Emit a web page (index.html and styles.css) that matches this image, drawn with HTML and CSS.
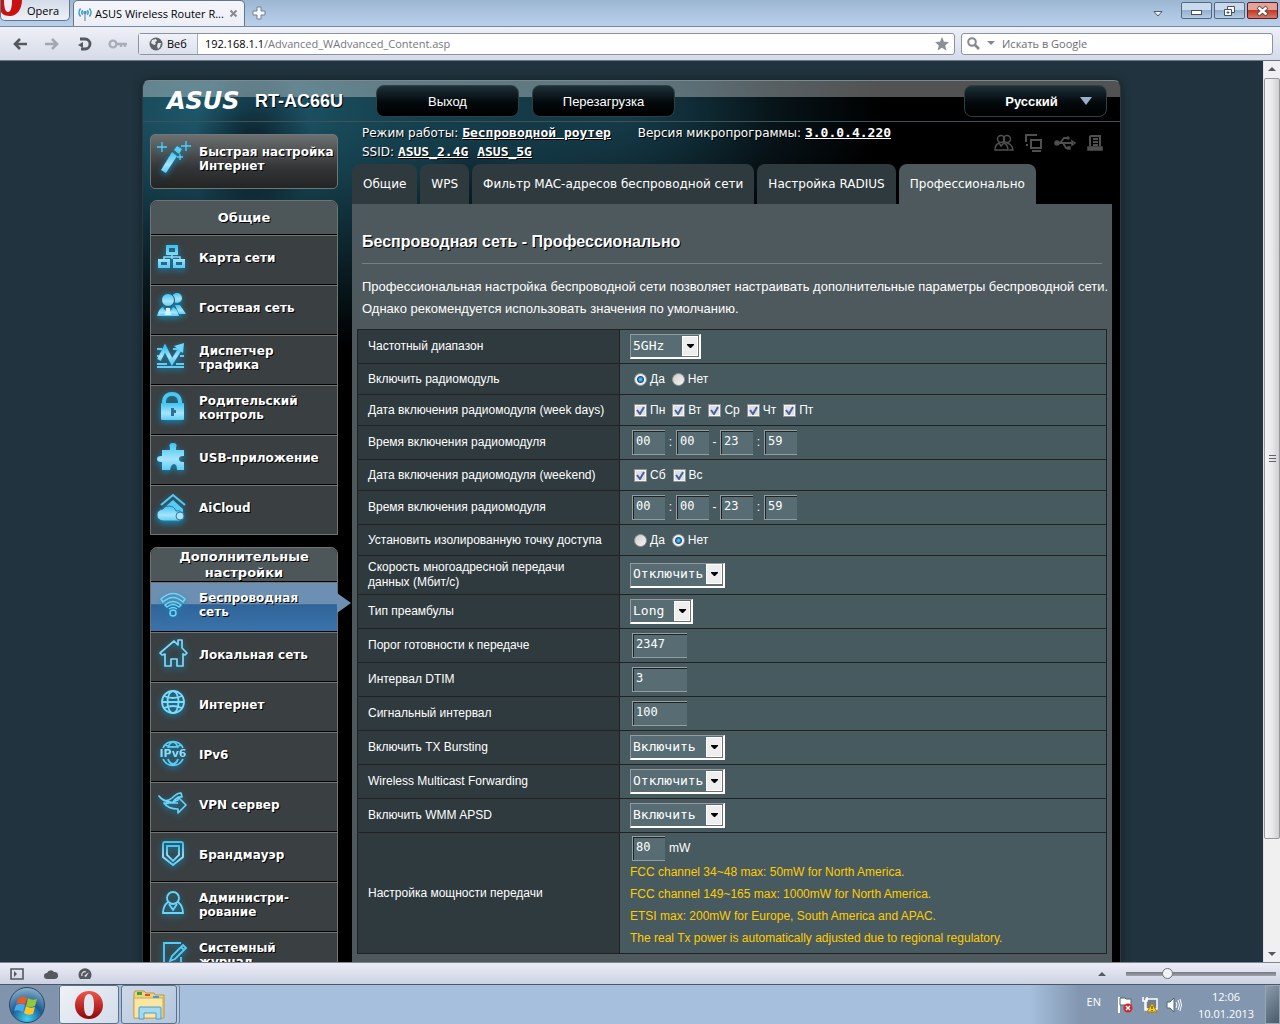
FILE: index.html
```html
<!DOCTYPE html>
<html lang="ru">
<head>
  <meta charset="UTF-8">
  <meta name="viewport" content="width=device-width, initial-scale=1.0">
  <title>ASUS Wireless Router RT-AC66U</title>
  <link rel="stylesheet" href="styles.css">
</head>
<body>

  <svg class="defs" width="0" height="0" aria-hidden="true">
    <defs>
      <linearGradient id="ice" x1="0" y1="0" x2="0" y2="1">
        <stop offset="0" stop-color="#3fc4f2"/>
        <stop offset="0.6" stop-color="#a5e4fb"/>
        <stop offset="1" stop-color="#5fcdf4"/>
      </linearGradient>
      <linearGradient id="operaRed" x1="0" y1="0" x2="0" y2="1">
        <stop offset="0" stop-color="#f0564a"/>
        <stop offset="1" stop-color="#8f0508"/>
      </linearGradient>
    </defs>
  </svg>

  <!-- Вкладки браузера -->
  <div class="tab-bar">
    <button type="button" class="opera-button">
      <svg width="22" height="20" viewBox="0 0 22 20"><path fill="#c9110f" d="M0 0h21c0 9-5 16-12 16-4 0-7-1-9-4z"/><path fill="#eceef5" d="M3 0h8c0 7-1 12-4 12S3 7 3 0z"/></svg>
      <span>Opera</span>
    </button>
    <div class="browser-tab">
      <svg width="16" height="16" viewBox="0 0 16 16" fill="none" stroke="#3f9ccb" stroke-width="1.6"><path d="M3.600 2.500a6 6 0 0 0 0 8M12.400 2.500a6 6 0 0 1 0 8M5.800 4.300a3 3 0 0 0 0 4.400M10.200 4.300a3 3 0 0 1 0 4.400"/><path stroke="#9aa5ae" d="M8 6v9"/><circle cx="8" cy="6.500" r="1" fill="#3f9ccb"/></svg>
      <span class="tab-title">ASUS Wireless Router R...</span>
      <button type="button" class="tab-close" aria-label="Закрыть вкладку"><svg width="9" height="9" viewBox="0 0 9 9"><path d="M1.500 1.500l6 6M7.500 1.500l-6 6" stroke="#878b92" stroke-width="2"/></svg></button>
    </div>
    <button type="button" class="tab-add" aria-label="Новая вкладка"><svg width="14" height="14" viewBox="0 0 14 14"><path d="M5 1h4v4h4v4H9v4H5V9H1V5h4z" fill="#f5f7fa" stroke="#75818f"/></svg></button>
    <div class="window-buttons">
      <button type="button" class="tab-list" aria-label="Список вкладок"><svg width="10" height="8" viewBox="0 0 10 8"><path d="M1 1.500h8L5 6z" fill="#f2f5f9" stroke="#505c6a"/></svg></button>
      <button type="button" class="win-button" aria-label="Свернуть"><svg width="13" height="12" viewBox="0 0 13 12"><rect x="1.500" y="5.500" width="10" height="4" fill="#fff" stroke="#46515e"/></svg></button>
      <button type="button" class="win-button" aria-label="Развернуть"><svg width="13" height="12" viewBox="0 0 13 12" fill="#fff" stroke="#46515e"><path d="M4.500 1.500h7v6h-7z"/><path d="M1.500 4.500h7v6h-7z"/><path d="M4 7h2v1H4z"/></svg></button>
      <button type="button" class="win-button win-close" aria-label="Закрыть"><svg width="13" height="12" viewBox="0 0 13 12"><path d="M2 2l9 8M11 2l-9 8" stroke="#4a3a40" stroke-width="4"/><path d="M2.500 2.500l8 7M10.500 2.500l-8 7" stroke="#fff" stroke-width="2.400"/></svg></button>
    </div>
  </div>

  <!-- Адресная строка -->
  <div class="address-bar">
    <div class="nav-buttons">
      <button type="button" aria-label="Назад"><svg width="16" height="14" viewBox="0 0 16 14"><path d="M15 7H3M8 2L3 7l5 5" fill="none" stroke="#55585e" stroke-width="2.600"/></svg></button>
      <button type="button" aria-label="Вперёд"><svg width="16" height="14" viewBox="0 0 16 14"><path d="M1 7h12M8 2l5 5-5 5" fill="none" stroke="#a3a7b0" stroke-width="2.600"/></svg></button>
      <button type="button" aria-label="Обновить"><svg width="16" height="14" viewBox="0 0 16 14"><path d="M4 2h5a4.800 4.800 0 0 1 0 10H5" fill="none" stroke="#55585e" stroke-width="2.800"/><path d="M2 8l5-3v6z" fill="#55585e"/></svg></button>
      <button type="button" aria-label="Пароль"><svg width="20" height="10" viewBox="0 0 20 10" fill="none" stroke="#a9adb6" stroke-width="2.400"><circle cx="5" cy="5" r="3.400"/><path d="M8 5h11M13 5v3M17 5v3"/></svg></button>
    </div>
    <div class="url-box">
      <button type="button" class="web-button">
        <svg width="14" height="14" viewBox="0 0 14 14"><circle cx="7" cy="7" r="6.500" fill="#5f636a"/><path d="M3 3l4-1 1 2-2 1 1 2-2 1-3-2zM9 6l3 0-1 4-2 2-1-3z" fill="#e8eaf0"/></svg>
        <span>Веб</span>
      </button>
      <a class="url" href="#"><b>192.168.1.1</b>/Advanced_WAdvanced_Content.asp</a>
      <svg width="14" height="14" viewBox="0 0 14 14"><path d="M7 0l2 4.700 5 .4-3.800 3.300 1.200 5L7 10.800l-4.400 2.600 1.200-5L0 5.100l5-.4z" fill="#8b8f96"/></svg>
    </div>
    <div class="search-box">
      <svg width="13" height="13" viewBox="0 0 13 13" fill="none" stroke="#85898f" stroke-width="2"><circle cx="5" cy="5" r="3.800"/><path d="M8 8l4 4" stroke-width="2.600"/></svg>
      <svg width="8" height="5" viewBox="0 0 8 5"><path d="M0 0h8L4 4z" fill="#85898f"/></svg>
      <input type="text" aria-label="Поиск" placeholder="Искать в Google">
    </div>
  </div>

  <!-- Страница роутера -->
  <div class="viewport">
    <div class="page">
      <div class="router">
        <header class="top">
          <span class="logo">ASUS</span>
          <span class="model">RT-AC66U</span>
          <button type="button" class="top-button">Выход</button>
          <button type="button" class="top-button">Перезагрузка</button>
          <select class="top-button language" aria-label="Язык">
            <option>Русский</option>
          </select>
        </header>

        <div class="columns">
          <nav class="sidebar">
            <a class="quick-setup" href="#">
              <svg class="icon" viewBox="0 0 32 32"><path d="M4 27L15 9l5 4L9 30z" fill="url(#ice)"/><path d="M17 7l3-4 5 3-3 5z" fill="#56cdf7"/><path d="M5-1v10M0 4h10M29-2v10M24 3h10M23 11v6M20 14h6" stroke="#56cdf7" stroke-width="1.300"/></svg>
              <span>Быстрая настройка Интернет</span>
            </a>

            <section class="menu">
              <h2>Общие</h2>
              <ul>
                <li><a href="#">
                  <svg class="icon" viewBox="0 0 32 32" fill="none" stroke="url(#ice)" stroke-width="3"><path d="M11.500 4.500h9v7h-9zM3.500 18.500h9v6h-9zM18.500 18.500h9v6h-9z"/><path d="M16 13v4M8 17v-2h16v2" stroke="#8adcf9" stroke-width="1.500"/></svg>
                  <span>Карта сети</span></a></li>
                <li><a href="#">
                  <svg class="icon" viewBox="0 0 32 32" fill="url(#ice)"><circle cx="21" cy="6" r="5"/><path d="M19 13h5l6 9h-7z"/><circle cx="12" cy="8" r="6.500" stroke="#30505e"/><path d="M1 24q2-8 6-9l5 8 5-8q4 1 6 9z"/><path d="M10 16h4l1 7h-6z" fill="#d4f3ff"/></svg>
                  <span>Гостевая сеть</span></a></li>
                <li><a href="#">
                  <svg class="icon" viewBox="0 0 32 32" fill="none" stroke="#62cdf4" stroke-width="2"><path d="M1 7h5M17 7h5M1 14h4M24 14h4M1 22h10M20 22h8M1 25h27"/><path d="M3 18l6-12 7 14 8-13" stroke="url(#ice)" stroke-width="4"/><path d="M18 4l10-3-1 10z" fill="#72d5f8" stroke="none"/></svg>
                  <span>Диспетчер<br>трафика</span></a></li>
                <li><a href="#">
                  <svg class="icon" viewBox="0 0 32 32"><path d="M8 13V9q1-7 8-7t8 7v4" fill="none" stroke="#4ac7f3" stroke-width="4"/><rect x="5" y="11" width="23" height="17" rx="1" fill="url(#ice)"/><path d="M15 16h3v2h2v3h-2v3h-3z" fill="#2c7193"/></svg>
                  <span>Родительский<br>контроль</span></a></li>
                <li><a href="#">
                  <svg class="icon" viewBox="0 0 32 32"><path d="M6 8h8V6q-2-5 3-5t3 5v2h8v6h-1q-4 0-4 3t4 3h1v8h-7q0-6-3-6t-4 6H6v-8H5q-4 0-4-3t4-3h1z" fill="url(#ice)"/></svg>
                  <span>USB-приложение</span></a></li>
                <li><a href="#">
                  <svg class="icon" viewBox="0 0 32 32"><path d="M5 13L17 3l12 10" fill="none" stroke="#55ccf5" stroke-width="2"/><path d="M8 16l9-8 10 9v9H15z" fill="#55ccf5"/><path d="M7 29q-6-1-6-6t6-6q1-3 6-3t7 5q6-1 7 4t-4 6z" fill="url(#ice)" stroke="#2e7895"/><circle cx="24" cy="24" r="4" fill="#a5e4fb" stroke="#2e7895"/></svg>
                  <span>AiCloud</span></a></li>
              </ul>
            </section>

            <section class="menu">
              <h2>Дополнительные<br>настройки</h2>
              <ul>
                <li class="active"><a href="#">
                  <svg class="icon" viewBox="0 0 32 32" fill="none" stroke="#6fd5f8" stroke-width="1.500"><path d="M5 10q12-11 24 0l-2 3q-10-9-20 0zM9 16q8-7 16 0l-2 2q-6-5-12 0zM13 20q4-3 8 0"/><circle cx="17" cy="24" r="3"/></svg>
                  <span>Беспроводная<br>сеть</span></a></li>
                <li><a href="#">
                  <svg class="icon" viewBox="0 0 32 32" fill="none" stroke="#7fdaf9" stroke-width="1.700" stroke-linejoin="round"><path d="M4 14L18 2l4 4V1h4v8l5 5-2 2-2-1v12h-6v-7h-6v7H9V15l-3 1z"/></svg>
                  <span>Локальная сеть</span></a></li>
                <li><a href="#">
                  <svg class="icon" viewBox="0 0 32 32" fill="none" stroke="#7fdaf9" stroke-width="1.800"><circle cx="17" cy="13" r="11"/><ellipse cx="17" cy="13" rx="5.500" ry="11"/><path d="M8 7q9 4 18 0M6 13h22M8 19q9-4 18 0"/></svg>
                  <span>Интернет</span></a></li>
                <li><a href="#">
                  <svg class="icon" viewBox="0 0 32 32" fill="none" stroke="#5acdf4" stroke-width="1.800"><path d="M7 9a11 11 0 0 1 20 0M7 20a11 11 0 0 0 20 0M12 9q1-5 5-6 4 1 5 6M12 20q1 4 5 5 4-1 5-5M9 6q8 4 16 0"/><text x="17" y="18" text-anchor="middle" class="icon-text">IPv6</text></svg>
                  <span>IPv6</span></a></li>
                <li><a href="#">
                  <svg class="icon" viewBox="0 0 32 32" fill="none" stroke="#6fd5f8" stroke-width="1.600" stroke-linejoin="round"><path d="M3 7q6 8 13 2 5-5 9-5l1 4q-5-1-9 5l5-2v-3l8 8-8 8v-4q-10 0-14-6 4 1 7-1Q7 13 3 7zM10 14h12"/></svg>
                  <span>VPN сервер</span></a></li>
                <li><a href="#">
                  <svg class="icon" viewBox="0 0 32 32" fill="none" stroke="url(#ice)" stroke-width="1.800"><path d="M9 3h16q2 0 2 2v13l-10 8-10-8V5q0-2 2-2z"/><path d="M11 7h12v9l-6 6-6-6z"/></svg>
                  <span>Брандмауэр</span></a></li>
                <li><a href="#">
                  <svg class="icon" viewBox="0 0 32 32" fill="none" stroke="#6fd5f8" stroke-width="1.800"><circle cx="17" cy="9" r="6"/><path d="M12 13q-5 4-5 11h20q0-7-5-11M13 15l4 6 4-6"/></svg>
                  <span>Администри-<br>рование</span></a></li>
                <li><a href="#">
                  <svg class="icon" viewBox="0 0 32 32" fill="none" stroke="#56cdf7" stroke-width="1.800"><path d="M25 4H8v23h17V18"/><path d="M14 22l2-5L27 6l3 3-11 11zM25 8l3 3"/></svg>
                  <span>Системный<br>журнал</span></a></li>
              </ul>
            </section>
          </nav>

          <main class="content">
            <div class="info">
              <div class="info-text">
                <p>Режим работы: <a href="#">Беспроводной роутер</a> <span class="firmware">Версия микропрограммы: <a href="#">3.0.0.4.220</a></span></p>
                <p>SSID: <a href="#">ASUS_2.4G</a> <a href="#" class="second-ssid">ASUS_5G</a></p>
              </div>
              <div class="status-icons">
                <svg width="20" height="18" viewBox="0 0 20 18"><circle cx="13" cy="5" r="3.500"/><path d="M13 9q5 1 6 7h-4"/><circle cx="7" cy="5" r="3.500"/><path d="M5 9q-4 2-4 7h13q0-5-4-7l-3 3z"/></svg>
                <svg width="20" height="18" viewBox="0 0 20 18"><path d="M13 1H2v7M2 11h2M7 6h10v8H7zM8 17h9" stroke-width="2"/></svg>
                <svg width="22" height="18" viewBox="0 0 22 18"><path d="M2 9h17M6 9l4-5h3M9 9l3 5h3" stroke-width="1.800"/><circle cx="3" cy="9" r="2" fill="#4f4f4f"/><circle cx="14" cy="4" r="1"/><path d="M18 7l3 2-3 2zM14 13h2v2h-2z"/></svg>
                <svg width="18" height="18" viewBox="0 0 18 18"><path d="M4 12V3q0-1 1-1h9v10M7 5h5M7 8h5M7 11h5" stroke-width="2"/><path d="M2 13h14v3H2z" fill="#4f4f4f"/></svg>
              </div>
            </div>

            <div class="tabs">
              <a href="#">Общие</a>
              <a href="#">WPS</a>
              <a href="#">Фильтр MAC-адресов беспроводной сети</a>
              <a href="#">Настройка RADIUS</a>
              <a href="#" class="current">Профессионально</a>
            </div>

            <form class="panel">
              <h1>Беспроводная сеть - Профессионально</h1>
              <p class="description">Профессиональная настройка беспроводной сети позволяет настраивать дополнительные параметры беспроводной сети.<br>Однако рекомендуется использовать значения по умолчанию.</p>

              <table class="settings">
                <tr>
                  <th><label for="band">Частотный диапазон</label></th>
                  <td><select id="band" class="select-medium"><option>5GHz</option><option>2.4GHz</option></select></td>
                </tr>
                <tr class="low">
                  <th>Включить радиомодуль</th>
                  <td><div class="choices">
                    <label><input type="radio" name="radio" checked>Да</label>
                    <label><input type="radio" name="radio">Нет</label>
                  </div></td>
                </tr>
                <tr class="low">
                  <th>Дата включения радиомодуля (week days)</th>
                  <td><div class="choices">
                    <label><input type="checkbox" checked>Пн</label>
                    <label><input type="checkbox" checked>Вт</label>
                    <label><input type="checkbox" checked>Ср</label>
                    <label><input type="checkbox" checked>Чт</label>
                    <label><input type="checkbox" checked>Пт</label>
                  </div></td>
                </tr>
                <tr>
                  <th>Время включения радиомодуля</th>
                  <td><div class="time">
                    <input type="text" value="00" aria-label="Часы начала"><span>:</span>
                    <input type="text" value="00" aria-label="Минуты начала"><span>-</span>
                    <input type="text" value="23" aria-label="Часы окончания"><span>:</span>
                    <input type="text" value="59" aria-label="Минуты окончания">
                  </div></td>
                </tr>
                <tr class="low">
                  <th>Дата включения радиомодуля (weekend)</th>
                  <td><div class="choices">
                    <label><input type="checkbox" checked>Сб</label>
                    <label><input type="checkbox" checked>Вс</label>
                  </div></td>
                </tr>
                <tr>
                  <th>Время включения радиомодуля</th>
                  <td><div class="time">
                    <input type="text" value="00" aria-label="Часы начала, выходные"><span>:</span>
                    <input type="text" value="00" aria-label="Минуты начала, выходные"><span>-</span>
                    <input type="text" value="23" aria-label="Часы окончания, выходные"><span>:</span>
                    <input type="text" value="59" aria-label="Минуты окончания, выходные">
                  </div></td>
                </tr>
                <tr class="low">
                  <th>Установить изолированную точку доступа</th>
                  <td><div class="choices">
                    <label><input type="radio" name="isolated">Да</label>
                    <label><input type="radio" name="isolated" checked>Нет</label>
                  </div></td>
                </tr>
                <tr class="high">
                  <th><label for="mrate">Скорость многоадресной передачи<br>данных (Мбит/с)</label></th>
                  <td><select id="mrate"><option>Отключить</option></select></td>
                </tr>
                <tr>
                  <th><label for="preamble">Тип преамбулы</label></th>
                  <td><select id="preamble" class="select-small"><option>Long</option><option>Short</option></select></td>
                </tr>
                <tr>
                  <th><label for="rts">Порог готовности к передаче</label></th>
                  <td><input type="text" id="rts" value="2347"></td>
                </tr>
                <tr>
                  <th><label for="dtim">Интервал DTIM</label></th>
                  <td><input type="text" id="dtim" value="3"></td>
                </tr>
                <tr>
                  <th><label for="beacon">Сигнальный интервал</label></th>
                  <td><input type="text" id="beacon" value="100"></td>
                </tr>
                <tr>
                  <th><label for="bursting">Включить TX Bursting</label></th>
                  <td><select id="bursting"><option>Включить</option><option>Отключить</option></select></td>
                </tr>
                <tr>
                  <th><label for="multicast">Wireless Multicast Forwarding</label></th>
                  <td><select id="multicast"><option>Отключить</option><option>Включить</option></select></td>
                </tr>
                <tr>
                  <th><label for="apsd">Включить WMM APSD</label></th>
                  <td><select id="apsd"><option>Включить</option><option>Отключить</option></select></td>
                </tr>
                <tr>
                  <th><label for="power">Настройка мощности передачи</label></th>
                  <td class="power">
                    <div class="time"><input type="text" id="power" value="80"><span class="unit">mW</span></div>
                    <p>FCC channel 34~48 max: 50mW for North America.</p>
                    <p>FCC channel 149~165 max: 1000mW for North America.</p>
                    <p>ETSI max: 200mW for Europe, South America and APAC.</p>
                    <p>The real Tx power is automatically adjusted due to regional regulatory.</p>
                  </td>
                </tr>
              </table>
            </form>
          </main>
        </div>
      </div>
    </div>
    <div class="scrollbar">
      <svg width="16" height="17" viewBox="0 0 16 17"><path d="M4 10l4-4 4 4z" fill="#55585e"/></svg>
      <div class="thumb"></div>
      <svg width="16" height="17" viewBox="0 0 16 17"><path d="M4 7l4 4 4-4z" fill="#55585e"/></svg>
    </div>
  </div>

  <!-- Строка состояния -->
  <div class="status-bar">
    <svg width="14" height="12" viewBox="0 0 14 12"><path d="M1 1h12v10H1z" fill="none" stroke="#55585e" stroke-width="1.600"/><path d="M4 3l3 3-3 3z" fill="#55585e"/></svg>
    <svg width="14" height="12" viewBox="0 0 14 12"><path d="M3 11a3 3 0 0 1 0-6 4 4 0 0 1 7-1 3.500 3.500 0 0 1 1 7z" fill="#55585e"/></svg>
    <svg width="14" height="12" viewBox="0 0 14 12"><path d="M2 11a6.500 6.500 0 1 1 10 0z" fill="#55585e"/><path d="M4 8a3 3 0 0 1 4-4" stroke="#e0e3ef" stroke-width="1.200" fill="none"/><path d="M6 8l5-4-3 5z" fill="#e0e3ef"/></svg>
    <svg class="zoom-toggle" width="8" height="5" viewBox="0 0 8 5"><path d="M0 5l4-4 4 4z" fill="#55585e"/></svg>
    <input type="range" class="zoom" min="0" max="100" value="26" aria-label="Масштаб">
  </div>

  <!-- Панель задач -->
  <div class="taskbar">
    <button type="button" class="start" aria-label="Пуск">
      <svg width="38" height="38" viewBox="0 0 38 38"><defs><radialGradient id="orb" cx="0.500" cy="0.900" r="0.900"><stop offset="0" stop-color="#3fd0f5"/><stop offset="0.500" stop-color="#1d5c93"/><stop offset="1" stop-color="#8fb4cd"/></radialGradient></defs><circle cx="19" cy="19" r="17.500" fill="url(#orb)" stroke="#2b4660"/><path d="M10 13q5-4 9-1l-2 7q-4-3-9-1z" fill="#ea5a24"/><path d="M20 12q4 3 9 1l-2 7q-4 2-9 0z" fill="#93c83d"/><path d="M8 19q5-3 9 0l-2 7q-4-3-9-1z" fill="#4aa9e8"/><path d="M18 20q4 3 9 1l-2 7q-5 2-9-1z" fill="#fbc52c"/></svg>
    </button>
    <button type="button" class="task" aria-label="Opera">
      <svg width="30" height="30" viewBox="0 0 30 30"><path fill="url(#operaRed)" fill-rule="evenodd" d="M15 1c8 0 14 6 14 14s-6 14-14 14S1 23 1 15 7 1 15 1zm0 3c-4 0-5 5-5 11s1 11 5 11 5-5 5-11-1-11-5-11z"/></svg>
    </button>
    <button type="button" class="task explorer" aria-label="Проводник">
      <svg width="34" height="30" viewBox="0 0 34 30"><path d="M2 3l1-2h9l2 2h8l1 2h9v23H2z" fill="#efd27c" stroke="#b99a48"/><path d="M2 8h29v20H2z" fill="#f8e6a2" stroke="#c9aa58"/><path d="M5 2h5v3H5z" fill="#3aa33a"/><path d="M13 4h5v2h-5z" fill="#d8503a"/><path d="M21 6h6v2h-6z" fill="#3f9fe0"/><path d="M7 29V18q0-1 1-1h20q1 0 1 1v11h-5v-6H12v6z" fill="#a5d9f2" stroke="#4b9fc8"/></svg>
    </button>
    <div class="tray">
      <span>EN</span>
      <svg width="18" height="18" viewBox="0 0 18 18"><path d="M2 1v16" stroke="#fff" stroke-width="2"/><path d="M3 2h5l1 1h5v7H9L8 9H3z" fill="#fff" stroke="#566"/><circle cx="11" cy="12" r="4.500" fill="#d8232a"/><path d="M9 10l4 4M13 10l-4 4" stroke="#fff" stroke-width="1.500"/></svg>
      <svg width="18" height="18" viewBox="0 0 18 18"><path d="M5 3h11v10H5z" fill="#6f7f90" stroke="#fff" stroke-width="1.500"/><path d="M2 1v4h4V1M4 5v9h3" stroke="#fff" stroke-width="1.500" fill="none"/><path d="M11 7l5 9H6z" fill="#f9cf1c" stroke="#a87d00"/><path d="M11 10v3M11 14v1" stroke="#222"/></svg>
      <svg width="18" height="18" viewBox="0 0 18 18"><path d="M2 6h3l4-4v14l-4-4H2z" fill="#fff" stroke="#566"/><path d="M11 6q2 3 0 6M13 4q3 5 0 10M15 3q3 6 0 12" fill="none" stroke="#fff"/></svg>
      <div class="clock">12:06<br>10.01.2013</div>
    </div>
    <button type="button" class="show-desktop" aria-label="Свернуть все окна"></button>
  </div>

</body>
</html>
```
FILE: styles.css
```css
* {
  box-sizing: border-box;
}

body {
  margin: 0;
  height: 100vh;
  display: flex;
  flex-direction: column;
  overflow: hidden;
  font-family: "Open Sans", sans-serif;
  font-size: 11px;
  background-color: #21333e;
}

button {
  padding: 0;
  border: none;
  background: none;
  font: inherit;
  color: inherit;
  cursor: pointer;
}

a {
  color: inherit;
  text-decoration: none;
}

ul, p, h1, h2 {
  margin: 0;
  padding: 0;
  list-style: none;
}

svg {
  flex: none;
}

.defs {
  position: absolute;
}

/* Вкладки */
.tab-bar {
  display: flex;
  align-items: flex-end;
  height: 27px;
  background: linear-gradient(#9db6d2, #b9d1eb);
  border-bottom: 1px solid #7387a0;
}

.opera-button {
  display: flex;
  align-items: center;
  align-self: flex-start;
  gap: 4px;
  width: 70px;
  height: 21px;
  border: 1px solid #66758a;
  border-top: none;
  border-radius: 0 0 5px 5px;
  background: linear-gradient(#d4dcea, #eef0f7);
}

.browser-tab {
  display: flex;
  align-items: center;
  gap: 2px;
  width: 172px;
  height: 26px;
  margin: 0 7px 0 3px;
  padding: 0 6px 0 3px;
  border: 1px solid #66758a;
  border-bottom: none;
  border-radius: 5px 5px 0 0;
  background: linear-gradient(#f5f6fb, #eceef6);
}

.tab-title {
  flex: 1;
  white-space: nowrap;
}

.tab-close {
  display: flex;
}

.tab-add {
  padding-bottom: 3px;
}

.window-buttons {
  display: flex;
  align-self: flex-start;
  gap: 2px;
  margin-left: auto;
  padding: 2px 2px 0 0;
}

.tab-list {
  margin-right: 16px;
  padding-top: 4px;
}

.win-button {
  display: flex;
  align-items: center;
  justify-content: center;
  width: 31px;
  height: 17px;
  border: 1px solid #54687f;
  border-radius: 2px;
  background: linear-gradient(#c9daed 45%, #93b0d0 50%, #b2cbe6);
}

.win-close {
  border-color: #5c1a28;
  background: linear-gradient(#e3a497 45%, #bf3a28 50%, #d87a62);
}

/* Адресная строка */
.address-bar {
  display: flex;
  align-items: center;
  gap: 6px;
  height: 34px;
  padding: 0 7px 0 12px;
  border-bottom: 1px solid #6b7686;
  background: linear-gradient(#eef0f7, #d6dbe9);
}

.nav-buttons {
  display: flex;
  gap: 16px;
  width: 120px;
}

.nav-buttons button {
  display: flex;
  align-items: center;
}

.url-box, .search-box {
  display: flex;
  align-items: center;
  height: 22px;
  border: 1px solid #8b92a3;
  border-radius: 3px;
  background-color: white;
}

.url-box {
  flex: 1;
  padding-right: 5px;
}

.web-button {
  display: flex;
  align-items: center;
  gap: 4px;
  width: 59px;
  height: 20px;
  padding: 0 10px;
  border-right: 1px solid #a9aebb;
  background: linear-gradient(#f0f2f8, #dde1ec);
}

.url {
  flex: 1;
  padding-left: 7px;
  color: #75787d;
}

.url b {
  font-weight: normal;
  color: black;
}

.search-box {
  gap: 7px;
  width: 312px;
  padding: 0 5px;
}

.search-box input {
  flex: 1;
  border: none;
  outline: none;
  padding: 0;
  font: inherit;
}

.search-box input::placeholder {
  color: #6b6e73;
}

/* Страница */
.viewport {
  display: flex;
  flex: 1;
  min-height: 0;
  overflow: hidden;
}

.page {
  flex: 1;
  padding-top: 19px;
  overflow: hidden;
}

.router {
  max-width: 979px;
  margin: 0 auto;
  border: 1px solid #2f373b;
  border-top-color: #7b8a90;
  border-radius: 7px 7px 0 0;
  color: white;
  background:
    radial-gradient(ellipse 60px 90px at 110px 70px, #0a1c26, transparent),
    radial-gradient(ellipse 70px 90px at 330px 150px, #06141b, transparent),
    radial-gradient(ellipse 540px 240px at 90px 30px, #1f5c70, transparent),
    radial-gradient(ellipse 260px 150px at 480px 30px, #12303c, transparent),
    black;
  box-shadow: 0 0 8px #14212a;
}

.top {
  display: flex;
  align-items: center;
  height: 41px;
  padding: 0 13px 0 24px;
  border-bottom: 1px solid #3d5259;
  border-radius: 6px 6px 0 0;
  background: linear-gradient(rgba(255, 255, 255, 0.32) 16px, transparent 16px);
}

.logo {
  width: 88px;
  font: italic bold 24px "DejaVu Sans", sans-serif;
}

.model {
  width: 121px;
  font: bold 18px "Liberation Sans", sans-serif;
  text-shadow: 1px 1px 0 black;
}

.top-button {
  width: 143px;
  height: 32px;
  margin-right: 13px;
  border: 1px solid #2e3f45;
  border-radius: 8px;
  color: white;
  font: 13px "Liberation Sans", sans-serif;
  background: linear-gradient(#1d3038, #03090c 55%, black);
}

.language {
  appearance: none;
  margin: 0 0 0 auto;
  padding: 0 34px 0 26px;
  font-weight: bold;
  text-align-last: center;
  background:
    url("data:image/svg+xml,%3Csvg xmlns='http://www.w3.org/2000/svg' width='12' height='8'%3E%3Cpath d='M0 0h12L6 8z' fill='%2398b0cc'/%3E%3C/svg%3E") no-repeat right 14px center,
    linear-gradient(#1d3038, #03090c 55%, black);
}

.columns {
  display: grid;
  grid-template-columns: 188px minmax(0, 1fr);
  gap: 14px;
  padding: 0 8px 0 7px;
}

/* Меню */
.sidebar {
  padding-top: 12px;
  font: bold 12px/14px "DejaVu Sans", sans-serif;
  text-shadow: 1px 1px 0 black;
}

.quick-setup {
  display: flex;
  align-items: center;
  gap: 10px;
  height: 55px;
  margin-bottom: 11px;
  padding: 0 0 6px 6px;
  border: 1px solid #737576;
  border-radius: 5px;
  background: linear-gradient(#6d7071, #343637 60%, #232525);
}

.icon {
  width: 32px;
  height: 32px;
  overflow: visible;
  filter: drop-shadow(0 2px 3px #1288b8);
}

.icon-text {
  font: bold 11px "DejaVu Sans", sans-serif;
  fill: #8adcf9;
  stroke: none;
  text-shadow: none;
}

.menu {
  margin-bottom: 12px;
  border: 1px solid #6f7475;
  border-radius: 7px 7px 0 0;
  background-color: #3a3f41;
}

.menu h2 {
  display: flex;
  align-items: center;
  justify-content: center;
  height: 33px;
  border-radius: 7px 7px 0 0;
  font-size: 13px;
  line-height: 16px;
  text-align: center;
  background-color: #4d5659;
}

.menu li {
  position: relative;
  height: 50px;
  border-top: 1px solid black;
}

.menu a {
  display: flex;
  align-items: center;
  gap: 11px;
  height: 49px;
  padding: 0 0 4px 5px;
  border-top: 1px solid #6f7475;
}

.menu .active a {
  background: linear-gradient(#6d90b2 44%, #2f6498 45%, #3a73ab);
}

.menu .active::after {
  content: "";
  position: absolute;
  top: 11px;
  left: 100%;
  border: 10px solid transparent;
  border-left: 14px solid #6d90b2;
  border-right: none;
}

/* Состояние */
.content {
  padding-top: 2px;
}

.info {
  display: flex;
  justify-content: space-between;
  margin-bottom: 2px;
  padding: 0 8px 0 10px;
  font: 12px/19px "DejaVu Sans", sans-serif;
  text-shadow: 1px 1px 0 black;
}

.info a {
  font-family: "DejaVu Sans Mono", monospace;
  font-size: 13px;
  font-weight: bold;
  line-height: 13px;
  text-decoration: underline;
}

.firmware {
  margin-left: 23px;
}

.second-ssid {
  margin-left: 5px;
}

.status-icons {
  display: flex;
  align-items: center;
  gap: 10px;
}

.status-icons svg {
  fill: none;
  stroke: #4f4f4f;
  stroke-width: 1.5px;
}

.tabs {
  display: flex;
  gap: 3px;
}

.tabs a {
  height: 40px;
  padding: 0 11px;
  border-radius: 8px 8px 0 0;
  font: 12px/40px "DejaVu Sans", sans-serif;
  white-space: nowrap;
  background-color: #2f3a3e;
}

.tabs .current {
  background-color: #4d595d;
}

.panel {
  padding: 28px 5px 60px;
  font: 12px/15px "Liberation Sans", sans-serif;
  background-color: #4d595d;
}

.panel h1 {
  height: 32px;
  margin: 0 5px 12px;
  border-bottom: 1px solid #6f8288;
  font-size: 16px;
  line-height: 20px;
  text-shadow: 1px 1px 0 black;
}

.description {
  margin: 0 -5px 9px 5px;
  font-size: 13px;
  line-height: 22px;
}

/* Таблица настроек */
.settings {
  width: 100%;
  border-collapse: collapse;
}

.settings th, .settings td {
  height: 34px;
  padding: 0 10px;
  border: 1px solid #222;
  background-color: #475a5f;
}

.settings th {
  width: 262px;
  font-weight: normal;
  text-align: left;
  background-color: #2f3a3e;
}

.settings .low th, .settings .low td {
  height: 31px;
}

.settings .high th, .settings .high td {
  height: 39px;
}

.settings select {
  appearance: none;
  display: block;
  width: 95px;
  height: 25px;
  padding: 0 0 2px 2px;
  border: 1px solid;
  border-color: #999 white white #999;
  border-right-width: 2px;
  border-bottom-width: 2px;
  border-radius: 0;
  color: white;
  font: 13px "DejaVu Sans Mono", monospace;
  background: url("data:image/svg+xml,%3Csvg xmlns='http://www.w3.org/2000/svg' width='17' height='21'%3E%3Cpath d='M0 0h17v21H0z' fill='%23707070'/%3E%3Cpath d='M0 0h16v20H0z' fill='white'/%3E%3Cpath d='M1 1h14v18H1z' fill='%23eee'/%3E%3Cpath d='M5 8h7v1l-3 3H8L5 9z'/%3E%3C/svg%3E") no-repeat right center #576d73;
}

.settings .select-medium {
  width: 71px;
}

.settings .select-small {
  width: 63px;
}

.settings input[type="text"] {
  display: block;
  width: 55px;
  height: 25px;
  margin-left: 2px;
  padding: 0 0 4px 3px;
  border: 1px solid #929ea1;
  border-right: none;
  border-radius: 0;
  color: white;
  font: 12px "DejaVu Sans Mono", monospace;
  background-color: #576d73;
  box-shadow: inset 1px 1px 0 #222;
}

.time {
  display: flex;
  align-items: center;
  padding-left: 2px;
}

.settings .time input {
  width: 33px;
  margin: 0;
}

.time span {
  width: 11px;
  text-align: center;
}

.time .unit {
  width: auto;
  margin-left: 4px;
}

.choices {
  display: flex;
  gap: 7px;
  padding-left: 4px;
}

.choices label {
  display: flex;
  align-items: center;
  gap: 3px;
}

.choices input {
  appearance: none;
  width: 13px;
  height: 13px;
  margin: 0;
  border: 1px solid #8e8f8f;
  background: linear-gradient(135deg, #ccc, #f6f6f6);
}

.choices input[type="checkbox"] {
  box-shadow: inset 0 0 0 1px #f4f4f4;
}

.choices input[type="checkbox"]:checked {
  background: url("data:image/svg+xml,%3Csvg xmlns='http://www.w3.org/2000/svg' width='11' height='11'%3E%3Cpath d='M2 5l3 4 4-7' fill='none' stroke='%234a5f97' stroke-width='2'/%3E%3C/svg%3E") #dcdfe6;
}

.choices input[type="radio"] {
  border-radius: 50%;
}

.choices input[type="radio"]:checked {
  background: radial-gradient(circle, #57b4e4 1px, #0f5488 3px, #eee 4px);
}

.power p {
  color: #fc0;
  line-height: 22px;
}

.settings .power {
  padding: 3px 10px 4px;
}

/* Полоса прокрутки */
.scrollbar {
  display: flex;
  flex-direction: column;
  width: 17px;
  background-color: #f0f0f0;
  border-left: 1px solid #e2e2e2;
}

.thumb {
  flex: 1;
  margin-bottom: 106px;
  border: 1px solid #979797;
  border-radius: 2px;
  background:
    repeating-linear-gradient(#606468 0 1px, transparent 1px 3px) no-repeat center / 7px 8px,
    linear-gradient(90deg, #f5f5f5, #e9e9eb 50%, #cfcfd2);
}

/* Строка состояния */
.status-bar {
  display: flex;
  align-items: center;
  gap: 20px;
  height: 22px;
  padding: 0 4px 0 10px;
  border-top: 1px solid #80848e;
  background: linear-gradient(#ebedf7, #cdd2e2);
}

.zoom-toggle {
  margin-left: auto;
}

.zoom {
  appearance: none;
  width: 150px;
  height: 12px;
  margin: 0;
  background: linear-gradient(#75787e, #a0a3aa) no-repeat center / 100% 4px;
}

.zoom::-webkit-slider-thumb {
  appearance: none;
  width: 11px;
  height: 11px;
  border: 1px solid #6d7178;
  border-radius: 50%;
  background-color: #f2f3f6;
}

/* Панель задач */
.taskbar {
  display: flex;
  align-items: stretch;
  gap: 2px;
  height: 40px;
  border-top: 1px solid #4b5868;
  color: white;
  background: linear-gradient(90deg, #8094ae 58px, #a5bfdc 62px, #a5bfdc 1030px, #8296b0 1080px);
}

.start {
  display: flex;
  align-items: center;
  justify-content: center;
  width: 57px;
}

.start svg {
  margin-right: 3px;
}

.task {
  display: flex;
  align-items: center;
  justify-content: center;
  width: 60px;
  border: 1px solid #5f7188;
  border-radius: 3px;
  background: linear-gradient(135deg, #eef2f7, #d3dce9);
}

.explorer {
  width: 56px;
  background: linear-gradient(135deg, #ced9e8, #b2c6df);
  box-shadow: 2px 0 0 #b5cae3, 3px 0 0 #6e819a;
}

.tray {
  display: flex;
  align-items: center;
  gap: 6px;
  margin-left: auto;
}

.tray > span {
  margin: 0 10px 6px 0;
}

.clock {
  width: 74px;
  line-height: 17px;
  text-align: center;
}

.show-desktop {
  width: 15px;
  border: 1px solid #97a7b8;
  background: linear-gradient(135deg, #8b9bad, #4c5b6b);
}
```
